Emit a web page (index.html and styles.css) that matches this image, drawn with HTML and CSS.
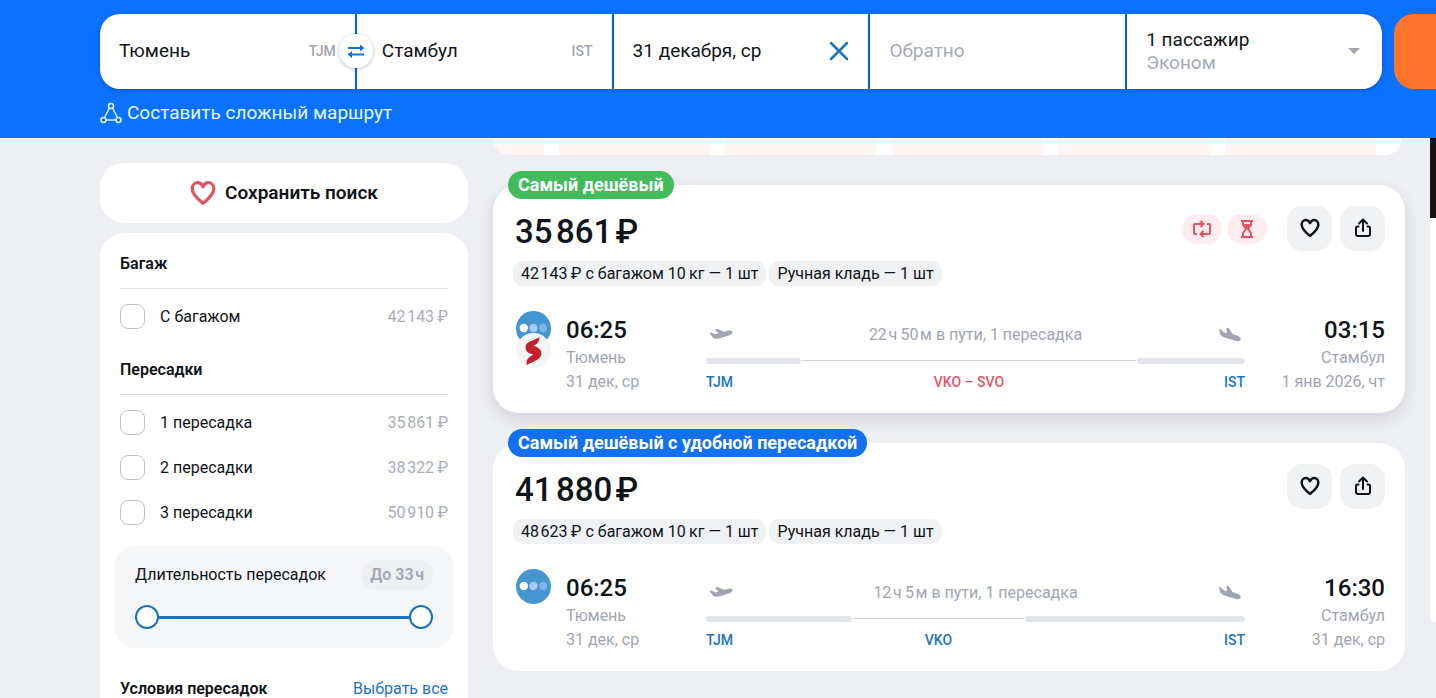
FILE: index.html
```
<!DOCTYPE html>
<html lang="ru">
<head>
    <meta charset="UTF-8">
    <meta name="viewport" content="width=device-width, initial-scale=1.0">
    <title>Тюмень — Стамбул, авиабилеты</title>
    <link rel="stylesheet" href="styles.css">
</head>
<body>
    <!-- Shared icons -->
    <svg class="sprite" aria-hidden="true">
        <symbol id="heart" viewBox="0 0 24 24">
            <path d="M12 21.500C8.500 18.500 2 13.500 2 8C2 4.500 4.300 2.500 7 2.500C9.300 2.500 11 4 12 6.200C13 4 14.700 2.500 17 2.500C19.700 2.500 22 4.500 22 8C22 13.500 15.500 18.500 12 21.500Z" fill="none" stroke="currentColor" stroke-linejoin="round"/>
        </symbol>
        <symbol id="share" viewBox="0 0 18 20">
            <path d="M9 13V2M5 5.500L9 1.500L13 5.500M4.500 8.500H3.500Q2 8.500 2 10V16Q2 18 4 18H14Q16 18 16 16V10Q16 8.500 14.500 8.500H13.500" fill="none" stroke="currentColor" stroke-width="2" stroke-linecap="round" stroke-linejoin="round"/>
        </symbol>
        <symbol id="takeoff" viewBox="0 0 24 14">
            <path d="M.500 5.500Q2 4 3.500 5L6.500 6.500L9.500 5.500L6.500 2.500Q6 1 8 .800L15 3.800L20 2.500Q23.500 2 23.800 4Q23.500 6 20.500 7.200L12 10Q6.500 11.500 4.500 10Z" fill="currentColor"/>
        </symbol>
        <symbol id="landing" viewBox="0 0 24 16">
            <path d="M1 2.500Q2.500 1.500 4 3.500L6 5.500L9 6L8.500 1.500Q9.500 0 11 1.500L14.500 7L19.500 8.800Q23 10.500 22.800 12.500Q22.500 14.500 19 14.200L8 11Q3 9.500 2 6.500Z" fill="currentColor"/>
        </symbol>
        <symbol id="dots" viewBox="0 0 36 36">
            <circle cx="18" cy="18" r="18" fill="#4595d1"/>
            <circle cx="8" cy="17.500" r="4.300" fill="#fff"/>
            <circle cx="18" cy="17.500" r="4.300" fill="#a5cdf2"/>
            <circle cx="28" cy="17.500" r="4.300" fill="#7db5e6"/>
        </symbol>
    </svg>

    <header class="header">
        <form class="search">
            <div class="field">
                <input type="text" id="from" aria-label="Откуда" value="Тюмень">
                <label class="code" for="from">TJM</label>
                <button type="button" class="swap" aria-label="Поменять местами">
                    <svg width="18" height="16" viewBox="0 0 18 16">
                        <path d="M1 5H14M4 11.500H17" stroke="currentColor" stroke-width="2.200"/>
                        <path d="M13 1.500L17.500 5L13 8.500ZM5 8L.500 11.500L5 15Z" fill="currentColor"/>
                    </svg>
                </button>
            </div>
            <div class="field field-to">
                <input type="text" id="to" aria-label="Куда" value="Стамбул">
                <label class="code" for="to">IST</label>
            </div>
            <div class="field">
                <input type="text" id="depart" aria-label="Туда" value="31 декабря, ср">
                <button type="button" class="clear" aria-label="Очистить">
                    <svg width="20" height="20" viewBox="0 0 20 20">
                        <path d="M2 2L18 18M18 2L2 18" stroke="currentColor" stroke-width="2.500" stroke-linecap="round"/>
                    </svg>
                </button>
            </div>
            <div class="field">
                <input type="text" id="return" aria-label="Обратно" placeholder="Обратно">
            </div>
            <button type="button" class="field passengers">
                <span>1 пассажир<small>Эконом</small></span>
                <svg width="12" height="6" viewBox="0 0 12 6"><path d="M0 0H12L6 6Z" fill="currentColor"/></svg>
            </button>
            <button type="submit" class="submit" aria-label="Найти"></button>
        </form>
        <a class="complex" href="#">
            <svg width="22" height="22" viewBox="0 0 22 22" fill="none" stroke="currentColor" stroke-width="1.500">
                <circle cx="11" cy="4" r="2.500"/>
                <circle cx="3.500" cy="18" r="2.500"/>
                <circle cx="18.500" cy="18" r="2.500"/>
                <path d="M9.500 6L4.500 15.500M12.500 6L17.500 15.500M6 18H16"/>
            </svg>
            Составить сложный маршрут
        </a>
    </header>

    <main class="page">
        <aside class="sidebar">
            <button type="button" class="save">
                <svg width="26" height="26"><use href="#heart"/></svg>
                Сохранить поиск
            </button>

            <div class="filters">
                <section>
                    <h2>Багаж</h2>
                    <label class="option"><input type="checkbox">С багажом<span>42&#8202;143&thinsp;₽</span></label>
                </section>
                <section>
                    <h2>Пересадки</h2>
                    <label class="option"><input type="checkbox">1 пересадка<span>35&#8202;861&thinsp;₽</span></label>
                    <label class="option"><input type="checkbox">2 пересадки<span>38&#8202;322&thinsp;₽</span></label>
                    <label class="option"><input type="checkbox">3 пересадки<span>50&#8202;910&thinsp;₽</span></label>
                </section>
                <div class="duration">
                    <div class="duration-head">
                        <span>Длительность пересадок</span>
                        <b>До 33&#8202;ч</b>
                    </div>
                    <div class="range">
                        <input type="range" min="0" max="33" value="0" aria-label="Минимальная длительность">
                        <input type="range" min="0" max="33" value="33" aria-label="Максимальная длительность">
                    </div>
                </div>
                <div class="conditions">
                    <h2>Условия пересадок</h2>
                    <a href="#">Выбрать все</a>
                </div>
            </div>
        </aside>

        <div class="results">
            <div class="calendar">
                <i></i><i></i><i></i><i></i><i></i><i></i>
            </div>

            <article class="ticket ticket-raised">
                <div class="badge badge-green">Самый дешёвый</div>
                <div class="ticket-head">
                    <div class="price">35&#8202;861&#8202;₽</div>
                    <span class="warn">
                        <svg width="20" height="20" viewBox="0 0 20 20" fill="none" stroke="currentColor" stroke-width="2" stroke-linejoin="round">
                            <path d="M5 15H3Q2 15 2 14V6Q2 5 3 5H10M15 5H17Q18 5 18 6V14Q18 15 17 15H10"/>
                            <path d="M8.500 2L11.500 5L8.500 8M11.500 12L8.500 15L11.500 18"/>
                        </svg>
                    </span>
                    <span class="warn">
                        <svg width="14" height="20" viewBox="0 0 14 20">
                            <path d="M1 2H13M1 18H13M3 2V6L6 10L3 14V18M11 2V6L8 10L11 14V18" fill="none" stroke="currentColor" stroke-width="2"/>
                            <path d="M3 5H11L7 11Z" fill="currentColor"/>
                        </svg>
                    </span>
                    <div class="actions">
                        <button type="button" aria-label="В избранное"><svg width="20" height="20"><use href="#heart"/></svg></button>
                        <button type="button" aria-label="Поделиться"><svg width="18" height="20"><use href="#share"/></svg></button>
                    </div>
                </div>
                <div class="tags">
                    <span>42&#8202;143&thinsp;₽ с багажом 10&thinsp;кг — 1 шт</span>
                    <span>Ручная кладь — 1 шт</span>
                </div>
                <div class="flight">
                    <div class="airlines">
                        <svg width="35" height="35"><use href="#dots"/></svg>
                        <svg width="35" height="35" viewBox="0 0 36 36">
                            <circle cx="18" cy="18" r="18" fill="#f4f4f5"/>
                            <path d="M24 4C24 9 22 11 18 13C23 15 27 17 26 22C25 28 17 29 11 33C10 27 13 25 18 22C13 21 9 19 10 13C11 8 19 8 24 4Z" fill="#c51f2b"/>
                        </svg>
                    </div>
                    <div class="point">
                        <time>06:25</time>
                        <p>Тюмень</p>
                        <p>31 дек, ср</p>
                    </div>
                    <div class="route">
                        <div class="route-head">
                            <svg width="24" height="14"><use href="#takeoff"/></svg>
                            <span>22&#8202;ч&thinsp;50&#8202;м в пути, 1 пересадка</span>
                            <svg width="24" height="16"><use href="#landing"/></svg>
                        </div>
                        <div class="legs">
                            <div class="leg" style="flex-grow: 95"><a href="#">TJM</a></div>
                            <div class="layover" style="flex-grow: 336"><a href="#" class="danger">VKO – SVO</a></div>
                            <div class="leg leg-last" style="flex-grow: 108"><a href="#">IST</a></div>
                        </div>
                    </div>
                    <div class="point point-end">
                        <time>03:15</time>
                        <p>Стамбул</p>
                        <p>1 янв 2026, чт</p>
                    </div>
                </div>
            </article>

            <article class="ticket">
                <div class="badge">Самый дешёвый с удобной пересадкой</div>
                <div class="ticket-head">
                    <div class="price">41&#8202;880&#8202;₽</div>
                    <div class="actions">
                        <button type="button" aria-label="В избранное"><svg width="20" height="20"><use href="#heart"/></svg></button>
                        <button type="button" aria-label="Поделиться"><svg width="18" height="20"><use href="#share"/></svg></button>
                    </div>
                </div>
                <div class="tags">
                    <span>48&#8202;623&thinsp;₽ с багажом 10&thinsp;кг — 1 шт</span>
                    <span>Ручная кладь — 1 шт</span>
                </div>
                <div class="flight">
                    <div class="airlines">
                        <svg width="35" height="35"><use href="#dots"/></svg>
                    </div>
                    <div class="point">
                        <time>06:25</time>
                        <p>Тюмень</p>
                        <p>31 дек, ср</p>
                    </div>
                    <div class="route">
                        <div class="route-head">
                            <svg width="24" height="14"><use href="#takeoff"/></svg>
                            <span>12&#8202;ч&thinsp;5&#8202;м в пути, 1 пересадка</span>
                            <svg width="24" height="16"><use href="#landing"/></svg>
                        </div>
                        <div class="legs">
                            <div class="leg" style="flex-grow: 146"><a href="#">TJM</a></div>
                            <div class="layover" style="flex-grow: 173"><a href="#">VKO</a></div>
                            <div class="leg leg-last" style="flex-grow: 220"><a href="#">IST</a></div>
                        </div>
                    </div>
                    <div class="point point-end">
                        <time>16:30</time>
                        <p>Стамбул</p>
                        <p>31 дек, ср</p>
                    </div>
                </div>
            </article>
        </div>

        <div class="promo"><div class="promo-image"></div></div>
    </main>
</body>
</html>
```
FILE: styles.css
```
* {
    box-sizing: border-box;
}

body {
    margin: 0;
    height: 100vh;
    overflow: hidden;
    background: #eeeff3;
    color: #0f1419;
    font-family: Roboto, Arial, sans-serif;
    font-size: 16px;
    line-height: 24px;
}

button, input {
    font: inherit;
    color: inherit;
    border: none;
    margin: 0;
    padding: 0;
}

button {
    cursor: pointer;
}

a {
    color: #1c73c4;
    text-decoration: none;
}

h2, p {
    margin: 0;
}

.sprite {
    display: none;
}

/* Header */
.header {
    background: #0b72ff;
    padding: 14px 0 13px 100px;
    overflow: hidden;
}

.search {
    display: grid;
    grid-template-columns: repeat(5, minmax(0, 1fr)) 52px;
    gap: 2px;
    font-size: 19px;
}

.field {
    height: 75px;
    position: relative;
    display: flex;
    align-items: center;
    justify-content: space-between;
    padding: 0 19px 2px;
    background: #fff;
    box-shadow: 0 1px 4px rgba(0, 40, 120, 0.4);
}

.field:first-child {
    border-radius: 20px 0 0 20px;
}

.field-to {
    padding-left: 25px;
}

.field input {
    flex: 1;
    min-width: 0;
    outline: none;
    background: none;
}

.field input::placeholder {
    color: #a6abb5;
    opacity: 1;
}

.code {
    color: #a0a6b0;
    font-size: 14px;
    font-weight: 500;
}

/* Sits on the border between the two cities */
.swap {
    position: absolute;
    right: -18px;
    z-index: 1;
    width: 34px;
    height: 34px;
    border-radius: 50%;
    background: #fff;
    color: #1c73c4;
    display: flex;
    align-items: center;
    justify-content: center;
    box-shadow: 0 1px 4px rgba(0, 0, 0, 0.25);
}

.clear {
    display: flex;
    background: none;
    color: #1c73c4;
}

.passengers {
    border-radius: 0 20px 20px 0;
    padding-right: 22px;
    text-align: left;
    line-height: 23px;
}

.passengers small {
    display: block;
    font-size: 19px;
    color: #a6abb5;
}

.passengers svg {
    color: #a0a6b0;
}

.submit {
    width: 160px;
    margin-left: 10px;
    border-radius: 20px;
    background: #ff752b;
}

.complex {
    display: inline-flex;
    align-items: center;
    gap: 5px;
    height: 24px;
    margin-top: 12px;
    color: #e4f6ff;
    font-size: 19px;
    vertical-align: top;
}

/* Page columns */
.page {
    display: grid;
    grid-template-columns: 368px minmax(0, 1fr) 6px;
    gap: 25px;
    padding-left: 100px;
}

.sidebar {
    padding-top: 25px;
}

.save {
    width: 100%;
    height: 60px;
    display: flex;
    align-items: center;
    justify-content: center;
    gap: 9px;
    border-radius: 24px;
    background: #fff;
    font-size: 19px;
    font-weight: 600;
}

.save svg {
    color: #e05666;
    stroke-width: 3;
}

.filters {
    margin-top: 10px;
    padding: 19px 20px 20px;
    border-radius: 24px;
    background: #fff;
}

.filters h2 {
    font-size: 16px;
    font-weight: 600;
    line-height: 24px;
}

.filters section {
    margin-bottom: 19px;
}

.filters section h2 {
    padding-bottom: 12px;
    margin-bottom: 5px;
    border-bottom: 1px solid #dddfe3;
}

.option {
    display: flex;
    align-items: center;
    gap: 15px;
    height: 45px;
}

.option input {
    appearance: none;
    width: 25px;
    height: 25px;
    border: 1px solid #bfc2c9;
    border-radius: 8px;
    background: #fff;
}

.option input:checked {
    background: #1c73c4;
}

.option span {
    margin-left: auto;
    color: #a9aeb8;
}

.duration {
    margin: -8px -5px 29px;
    padding: 14px 20px 19px;
    border-radius: 20px;
    background: #f5f6f8;
}

.duration-head {
    display: flex;
    align-items: center;
    justify-content: space-between;
}

.duration-head b {
    padding: 3px 9px;
    border-radius: 15px;
    background: #eeeff3;
    color: #a0a6b3;
    font-weight: 600;
}

.range {
    position: relative;
    height: 24px;
    margin-top: 15px;
    background: linear-gradient(#1c73c4, #1c73c4) center / 100% 3px no-repeat;
}

/* Two range inputs share one track */
.range input {
    position: absolute;
    inset: 0;
    width: 100%;
    appearance: none;
    background: none;
    pointer-events: none;
}

.range input::-webkit-slider-thumb {
    appearance: none;
    width: 24px;
    height: 24px;
    border: 2px solid #1c73c4;
    border-radius: 50%;
    background: #fff;
    pointer-events: auto;
}

.conditions {
    display: flex;
    justify-content: space-between;
}

/* Results */
.calendar {
    display: grid;
    grid-template-columns: 51px repeat(5, 1fr);
    gap: 15px;
    height: 17px;
    padding-right: 26px;
    margin: 0 3px 30px 0;
    border-radius: 0 0 24px 24px;
    background: #fff;
    overflow: hidden;
}

.calendar i {
    background: #fff5f5;
}

.ticket {
    position: relative;
    margin-bottom: 30px;
    padding: 21px 20px 19px;
    border-radius: 26px;
    background: #fff;
}

.ticket-raised {
    box-shadow: 0 6px 16px rgba(40, 45, 60, 0.14);
}

.badge {
    position: absolute;
    top: -14px;
    left: 15px;
    padding: 0 10px;
    border-radius: 14px;
    background: #1370ee;
    color: #fff;
    font-size: 18px;
    font-weight: 700;
    line-height: 28px;
}

.badge-green {
    background: #41bb5b;
}

.ticket-head {
    display: flex;
    align-items: center;
    gap: 5px;
}

.price {
    flex: 1;
    padding: 6px 0 0 2px;
    font-size: 33px;
    font-weight: 500;
    line-height: 38px;
}

.warn {
    width: 40px;
    height: 30px;
    display: flex;
    align-items: center;
    justify-content: center;
    border-radius: 15px;
    background: #ffecee;
    color: #e05666;
}

.actions {
    display: flex;
    gap: 8px;
    margin-left: 15px;
}

.actions button {
    width: 45px;
    height: 45px;
    display: flex;
    align-items: center;
    justify-content: center;
    padding-bottom: 2px;
    border-radius: 15px;
    background: #f1f2f4;
    stroke-width: 3;
}

.tags {
    display: flex;
    gap: 3px;
    margin-top: 10px;
}

.tags span {
    padding: 0 8px;
    border-radius: 10px;
    background: #f0f1f3;
    line-height: 25px;
}

.flight {
    display: grid;
    grid-template-columns: 50px 140px 1fr 140px;
    margin-top: 25px;
    padding-left: 3px;
}

.airlines {
    display: flex;
    flex-direction: column;
}

.airlines svg + svg {
    margin-top: -13px;
}

.point {
    padding-top: 3px;
    color: #a0a6b0;
}

.point time {
    display: block;
    color: #0f1419;
    font-size: 24px;
    font-weight: 500;
    line-height: 32px;
}

.point-end {
    text-align: right;
}

.route-head {
    display: flex;
    align-items: center;
    justify-content: space-between;
    height: 47px;
    padding: 0 3px;
    color: #a0a6b0;
}

.legs {
    display: flex;
    font-size: 14px;
    font-weight: 500;
    line-height: 18px;
}

.leg, .layover {
    flex: 1 1 0;
}

.leg::before {
    content: "";
    display: block;
    height: 6px;
    margin-bottom: 9px;
    border-radius: 3px;
    background: #e1e4e9;
}

.leg-last {
    text-align: right;
}

.layover {
    text-align: center;
}

.layover::before {
    content: "";
    display: block;
    height: 1px;
    margin: 2px 1px 12px;
    background: #d0d3d9;
}

.danger {
    color: #e05666;
}

/* Right banner */
.promo {
    height: 484px;
    border-radius: 0 0 0 20px;
    background: #fff;
    overflow: hidden;
}

.promo-image {
    height: 80px;
    background: #1a100c;
}
```
